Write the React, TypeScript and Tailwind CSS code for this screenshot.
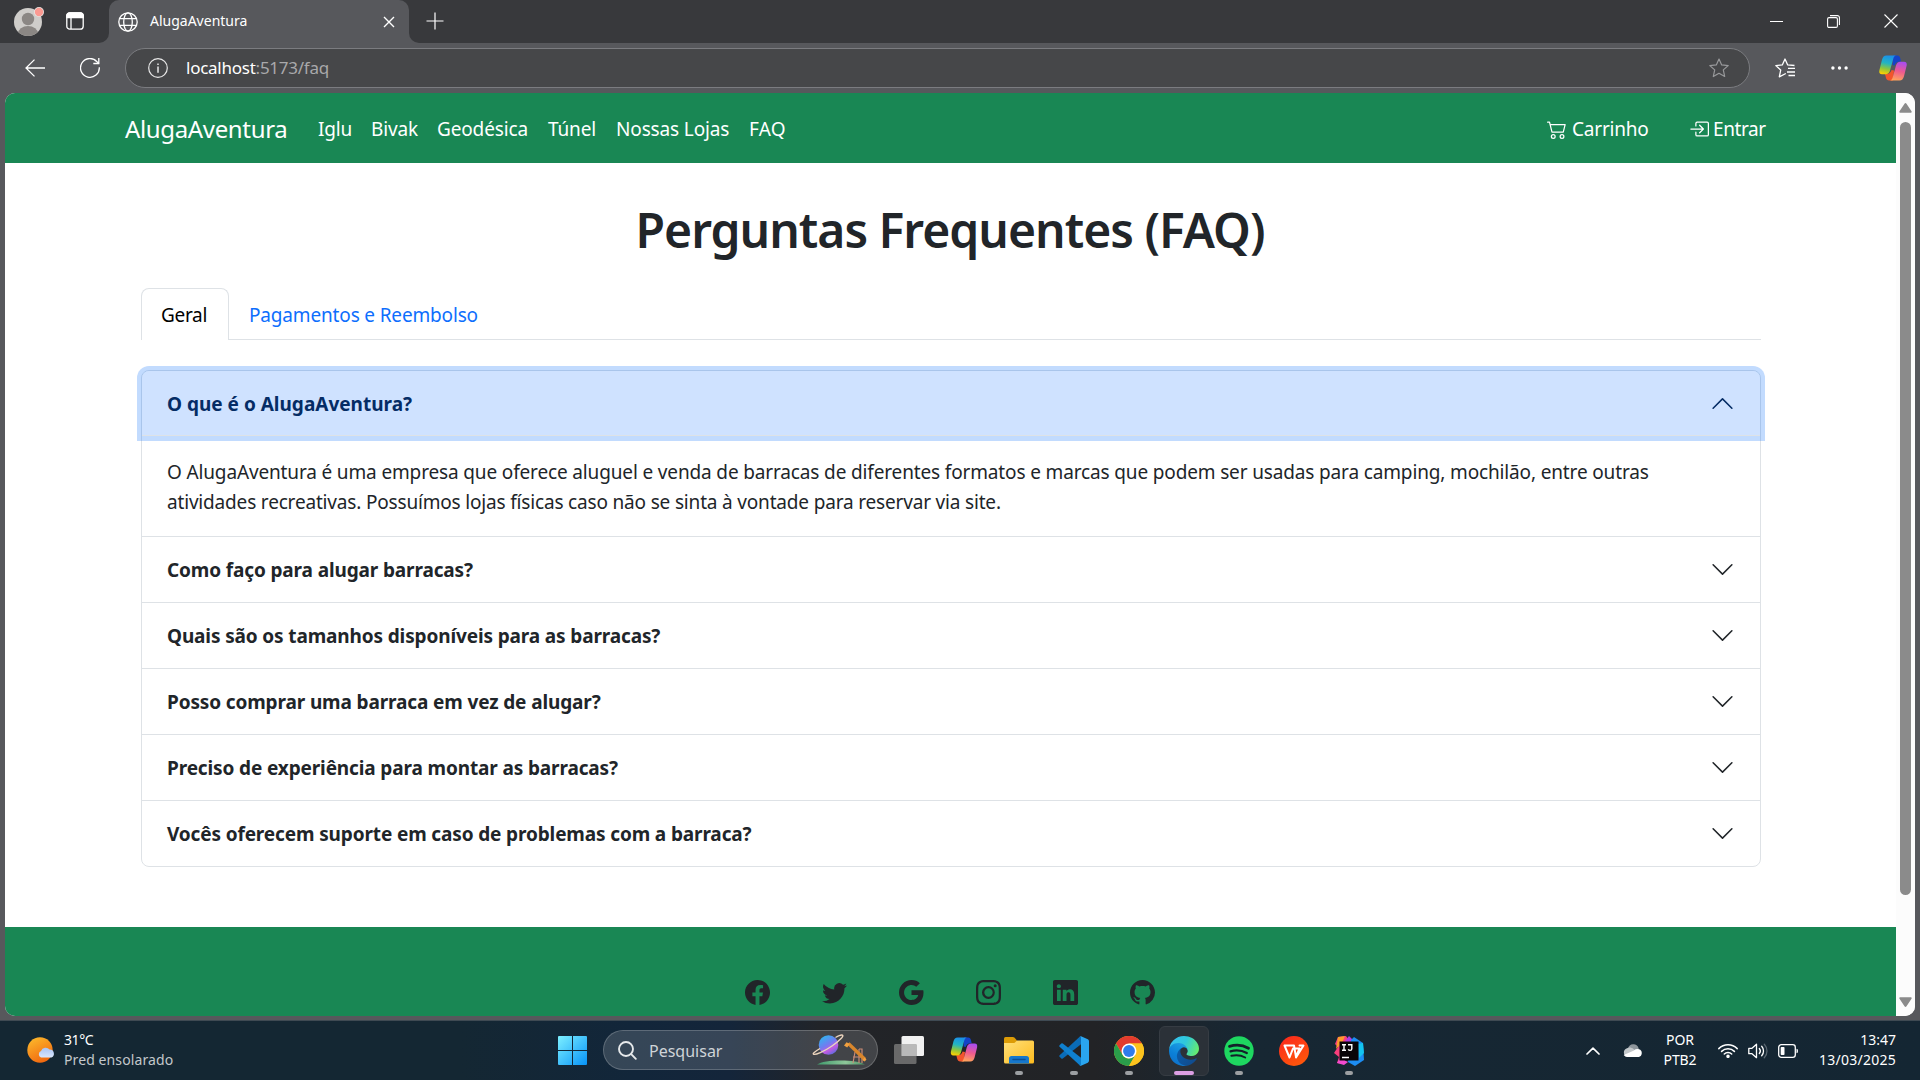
import type { ReactNode } from "react";
import {
  BsBoxArrowInRight,
  BsCart2,
  BsChevronDown,
  BsChevronUp,
  BsFacebook,
  BsGithub,
  BsGoogle,
  BsInstagram,
  BsLinkedin,
  BsTwitter,
} from "react-icons/bs";

function CopilotIcon({ id, className }: { id: string; className: string }) {
  return (
    <svg viewBox="0 0 28 26" className={className}>
      <defs>
        <linearGradient id={id + "a"} x1="0.5" y1="0" x2="0.3" y2="1">
          <stop offset="0" stopColor="#1b8fe8" />
          <stop offset="0.4" stopColor="#22b4c4" />
          <stop offset="0.7" stopColor="#8cc63f" />
          <stop offset="1" stopColor="#ffd000" />
        </linearGradient>
        <linearGradient id={id + "b"} x1="0.6" y1="0" x2="0.4" y2="1">
          <stop offset="0" stopColor="#a94cf0" />
          <stop offset="0.5" stopColor="#ee5a90" />
          <stop offset="1" stopColor="#ffa45c" />
        </linearGradient>
      </defs>
      <path d="M14 0.5 H18.5 C20 0.5 20.8 1.5 21.2 3 L22 6.5 C18 6.5 16.5 8 15.8 10.5 L13.5 10Z" fill="#1443c8" />
      <path d="M14 25.5 H10 C8.3 25.5 7.5 24.5 7 23 L6 19 C10.5 19 11.8 17.5 12.5 15 L15 15.5Z" fill="#f2552c" />
      <path d="M7.5 0.5 H17.5 C15.5 0.5 14.8 2 14.2 4 L11 15.5 C10.2 18 9 19.3 6.5 19.3 H3 C0.6 19.3 -0.1 17.6 0.4 15.2 L3 4.8 C3.8 2 5 0.5 7.5 0.5Z" fill={`url(#${id}a)`} />
      <path d="M20.5 25.5 H10.5 C12.5 25.5 13.2 24 13.8 22 L17 10.5 C17.8 8 19 6.7 21.5 6.7 H25 C27.4 6.7 28.1 8.4 27.6 10.8 L25 21.2 C24.2 24 23 25.5 20.5 25.5Z" fill={`url(#${id}b)`} />
    </svg>
  );
}

function TitleBar() {
  return (
    <div className="flex h-[43px] bg-[#57585c] text-white">
      <div className="flex w-[109px] items-center rounded-br-[10px] bg-[#38393c] pl-[14px]">
        <svg viewBox="0 0 30 30" className="h-[30px] w-[30px] shrink-0">
          <clipPath id="avatar">
            <circle cx="14" cy="15" r="14" />
          </clipPath>
          <circle cx="14" cy="15" r="14" fill="#cfcdca" />
          <g clipPath="url(#avatar)" fill="#8b8784">
            <circle cx="14" cy="12" r="6.2" />
            <ellipse cx="14" cy="26.5" rx="10" ry="7.5" />
          </g>
          <circle cx="25" cy="5" r="5" fill="#e8e4e2" />
          <circle cx="25" cy="5" r="4.2" fill="#fb9a92" />
        </svg>
        <svg viewBox="0 0 18 18" className="mb-px ml-[22px] h-[18px] w-[18px]" fill="none" stroke="#fff" strokeWidth="1.3">
          <rect x="0.8" y="0.8" width="16.4" height="16.4" rx="3" />
          <path d="M0.8 5.5V3.5a2.7 2.7 0 0 1 2.7-2.7h11a2.7 2.7 0 0 1 2.7 2.7v2Z" fill="#fff" />
          <path d="M5 5v12" />
        </svg>
      </div>
      <div className="w-[300px] bg-[#38393c]">
        <div className="flex h-full items-center rounded-t-[10px] bg-[#57585c] pl-[9px] pr-[14px]">
          <svg viewBox="0 0 20 20" className="h-5 w-5" fill="none" stroke="#fff" strokeWidth="1.3">
            <circle cx="10" cy="10" r="9.2" />
            <ellipse cx="10" cy="10" rx="4.3" ry="9.2" />
            <path d="M1.5 6.7h17M1.5 13.3h17" />
          </svg>
          <span className="mb-0.5 ml-3 text-[14px] leading-5">AlugaAventura</span>
          <svg viewBox="0 0 12 12" className="ml-auto h-3 w-3" stroke="#fff" strokeWidth="1.4">
            <path d="M1 1l10 10M11 1L1 11" />
          </svg>
        </div>
      </div>
      <div className="flex flex-1 items-center rounded-bl-[10px] bg-[#38393c] pb-px pl-[17px] pr-[22px]">
        <svg viewBox="0 0 18 18" className="h-[18px] w-[18px]" stroke="#fff" strokeWidth="1.2">
          <path d="M9 0.5v17M0.500 9h17" />
        </svg>
        <div className="ml-auto flex items-center gap-11">
          <svg viewBox="0 0 13 13" className="h-[13px] w-[13px]" stroke="#fff">
            <path d="M0 6.5h13" />
          </svg>
          <svg viewBox="0 0 13 13" className="h-[13px] w-[13px]" fill="none" stroke="#fff" strokeWidth="1.1">
            <rect x="0.6" y="2.6" width="9.8" height="9.8" rx="1.4" />
            <path d="M3 0.6h7.4a2 2 0 0 1 2 2V10" />
          </svg>
          <svg viewBox="0 0 14 14" className="h-[14px] w-[14px]" stroke="#fff" strokeWidth="1.1">
            <path d="M0.500 0.500l13 13M13.500 0.500l-13 13" />
          </svg>
        </div>
      </div>
    </div>
  );
}

function AddressBar() {
  return (
    <div className="flex h-[50px] items-center bg-[#57585c]">
      <svg viewBox="0 0 20 18" className="mb-px ml-[25px] h-[18px] w-5" fill="none" stroke="#fff" strokeWidth="1.3">
        <path d="M20 9H1M9.500 0.600L1 9l8.500 8.400" />
      </svg>
      <svg viewBox="0 0 20 20" className="ml-[35px] h-5 w-5" fill="none" stroke="#fff" strokeWidth="1.3">
        <path d="M19.300 9.200A9.400 9.400 0 1 1 17 3.700L18.800 5.500" />
        <path d="M18.800 0v5.500h-5.500" />
      </svg>
      <div className="ml-[25px] flex h-10 w-[1625px] items-center rounded-full border border-[#7b7c80] bg-[#464749] pl-[22px] pr-[20px]">
        <svg viewBox="0 0 20 20" className="h-5 w-5" fill="none" stroke="#e8e8e8" strokeWidth="1.2">
          <circle cx="10" cy="10" r="9.300" />
          <path d="M10 8.500v6.300M10 5.400v1.500" strokeWidth="1.5" />
        </svg>
        <span className="ml-[18px] text-[17px] leading-6 tracking-[-0.25px] text-white">
          localhost<span className="text-[#a9a9ab]">:5173/faq</span>
        </span>
        <svg viewBox="0 0 20 20" className="ml-auto h-5 w-5" fill="none" stroke="#98999b" strokeWidth="1.2" strokeLinejoin="round">
          <path d="M10 1l2.700 5.900 6.500.7-4.900 4.300 1.400 6.600L10 15.300l-5.700 3.200 1.400-6.600L.8 7.600l6.500-.7z" />
        </svg>
      </div>
      <svg viewBox="0 0 20 20" className="ml-[25px] h-5 w-5" fill="none" stroke="#fff" strokeWidth="1.3" strokeLinejoin="round">
        <path d="M10.800 15.500L4.300 18.800l1.400-6.700L.8 7.600l6.500-.7L10 1l2.700 5.900 6.800.6" />
        <path d="M13 10.300h7M12 14h8M13.500 17.500H20" strokeLinejoin="miter" />
      </svg>
      <svg viewBox="0 0 17 4" className="ml-9 h-1 w-[17px]" fill="#fff">
        <circle cx="1.900" cy="2" r="1.700" />
        <circle cx="8.500" cy="2" r="1.700" />
        <circle cx="15.100" cy="2" r="1.700" />
      </svg>
      <CopilotIcon id="edgeCopilot" className="ml-[31px] h-[26px] w-7" />
    </div>
  );
}

function SiteNav() {
  return (
    <nav className="flex h-[70px] items-center bg-[#198754] pt-0.5 pl-[120px] text-[19px] tracking-[-0.14px] whitespace-nowrap text-white">
      <a className="w-[193px] text-[24px] tracking-[-0.35px]">AlugaAventura</a>
      <a className="w-[53px]">Iglu</a>
      <a className="w-[66px]">Bivak</a>
      <a className="w-[111px]">Geodésica</a>
      <a className="w-[68px]">Túnel</a>
      <a className="w-[133px]">Nossas Lojas</a>
      <a className="tracking-[0.3px]">FAQ</a>
      <div className="ml-auto flex w-[349px] items-center">
        <a className="flex w-[142px] items-center gap-[5px] tracking-[-0.2px]">
          <BsCart2 className="h-5 w-5" />
          Carrinho
        </a>
        <a className="flex items-center gap-1 tracking-[-0.4px]">
          <BsBoxArrowInRight className="h-5 w-5" />
          Entrar
        </a>
      </div>
    </nav>
  );
}

const closedQuestions = [
  "Como faço para alugar barracas?",
  "Quais são os tamanhos disponíveis para as barracas?",
  "Posso comprar uma barraca em vez de alugar?",
  "Preciso de experiência para montar as barracas?",
  "Vocês oferecem suporte em caso de problemas com a barraca?",
];

function Faq() {
  return (
    <main className="h-[764px] pr-[135px] pl-[136px] text-[#212529]">
      <h1 className="pt-[37px] pr-0.5 text-center text-[48px] leading-[60px] font-semibold tracking-[-1px]">
        Perguntas Frequentes (FAQ)
      </h1>
      <div className="mt-7 flex h-[52px] border-b border-[#dee2e6] text-[19px]">
        <button className="-mb-px flex w-[88px] items-center rounded-t-lg border border-b-0 border-[#dee2e6] bg-white pt-0.5 pl-[19px] tracking-[-0.3px] text-black">
          Geral
        </button>
        <button className="flex items-center pt-[3px] pl-5 tracking-[-0.16px] text-[#0d6efd]">Pagamentos e Reembolso</button>
      </div>
      <div className="mt-[30px] rounded-lg border border-[#dee2e6] text-[19px]">
        <div className="relative z-10 flex h-[65px] items-center justify-between rounded-t-[7px] bg-[#cfe2ff] pr-[25px] pl-[25px] font-bold text-[#052c65] shadow-[inset_0_-1px_0_#dee2e6,0_0_0_5px_rgba(13,110,253,0.25)]">
          <span className="pt-0.5">O que é o AlugaAventura?</span>
          <BsChevronUp className="h-[25px] w-[25px]" />
        </div>
        <p className="h-[100px] pt-[21px] pl-[25px] leading-[30px] tracking-[-0.145px] whitespace-nowrap">
          O AlugaAventura é uma empresa que oferece aluguel e venda de barracas de diferentes formatos e marcas que podem
          ser usadas para camping, mochilão, entre outras
          <br />
          <span className="tracking-[-0.175px]">
            atividades recreativas. Possuímos lojas físicas caso não se sinta à vontade para reservar via site.
          </span>
        </p>
        {closedQuestions.map((q) => (
          <div
            key={q}
            className="flex h-[66px] items-center justify-between border-t border-[#dee2e6] pr-[25px] pl-[25px] font-bold tracking-[-0.13px]"
          >
            <span className="pt-0.5">{q}</span>
            <BsChevronDown className="h-[25px] w-[25px]" />
          </div>
        ))}
      </div>
    </main>
  );
}

function SiteFooter() {
  return (
    <footer className="flex h-[89px] justify-center gap-[52px] bg-[#198754] pt-[53px] pr-[2px] text-[25px] text-[#212529]">
      <BsFacebook />
      <BsTwitter />
      <BsGoogle />
      <BsInstagram />
      <BsLinkedin />
      <BsGithub />
    </footer>
  );
}

function Scrollbar() {
  return (
    <div className="flex w-[19px] flex-col items-center bg-[#fcfcfc] pt-[10px] pb-[9px]">
      <svg viewBox="0 0 13 10" className="h-[10px] w-[13px]" fill="#8b8b8b">
        <path d="M5.500.8a1.200 1.200 0 0 1 2 0l5 7.400c.5.800 0 1.600-.9 1.600H1.400C.5 9.800 0 9 .5 8.200Z" />
      </svg>
      <div className="mt-[9px] h-[773px] w-[11px] rounded-full bg-[#8b8b8b]" />
      <svg viewBox="0 0 13 10" className="mt-auto h-[10px] w-[13px] rotate-180" fill="#8b8b8b">
        <path d="M5.500.8a1.200 1.200 0 0 1 2 0l5 7.400c.5.800 0 1.600-.9 1.600H1.400C.5 9.800 0 9 .5 8.200Z" />
      </svg>
    </div>
  );
}

function TaskSlot({ children, state }: { children: ReactNode; state?: "open" | "active" }) {
  return (
    <div className="flex h-[59px] w-[55px] items-center justify-center">
      <div
        className={
          state === "active"
            ? "relative flex h-[50px] w-[50px] items-center justify-center rounded-md border border-[#363c43] bg-[#2b3138]"
            : "relative flex h-[50px] w-[50px] items-center justify-center"
        }
      >
        {children}
        {state === "open" && <span className="absolute bottom-[1px] h-1 w-2 rounded-full bg-[#9c9fa2]" />}
        {state === "active" && <span className="absolute bottom-0 h-1 w-5 rounded-full bg-[#dc9fe3]" />}
      </div>
    </div>
  );
}

function SearchArt() {
  return (
    <svg viewBox="0 0 56 32" className="ml-auto h-8 w-14">
      <defs>
        <linearGradient id="planet" x1="0.2" y1="0" x2="0.8" y2="1">
          <stop offset="0" stopColor="#2bb8ee" />
          <stop offset="0.45" stopColor="#6f7df0" />
          <stop offset="0.7" stopColor="#c05be0" />
          <stop offset="1" stopColor="#4a6fe0" />
        </linearGradient>
        <linearGradient id="grass">
          <stop offset="0" stopColor="#3f9a6c" />
          <stop offset="0.6" stopColor="#8fc79a" />
          <stop offset="1" stopColor="#4b8f62" />
        </linearGradient>
      </defs>
      <path d="M5 30.500C12 25 45 25 53 30.500Z" fill="url(#grass)" />
      <circle cx="16.500" cy="11" r="9.800" fill="url(#planet)" />
      <path d="M8 14.500C3 17.500.5 19.500 1.500 20.200 3 21.400 12 17.500 20 12S32 2 30.500 1.200C29.500.6 26.500 1.800 23.500 3.500" fill="none" stroke="#ecd5be" strokeWidth="1.400" />
      <path d="M43 18l-2 11M47 15v14M47 15h3v14M41 23h9" stroke="#c98b76" strokeWidth="1.200" fill="none" />
      <path d="M35 10.500l2.500-2.200L54 24l-1.800 3.200Z" fill="#d9862c" />
      <path d="M32 11.500l2.600-3.200 3.200 1.600-2.600 3.600ZM50.500 26l2-2.600 2 2-1.800 2.200Z" fill="#f0a040" />
    </svg>
  );
}

function TaskIcons() {
  return (
    <div className="ml-[3px] flex">
      <TaskSlot>
        <svg viewBox="0 0 30 28" className="mb-0.5 h-7 w-[30px]">
          <rect x="7.500" width="22.500" height="20" rx="1.500" fill="#f1f1f1" />
          <rect y="8" width="22.500" height="20" rx="1.500" fill="#767676" fillOpacity="0.85" />
          <path d="M7.500 8h15v12h-15z" fill="#b9b9b9" />
        </svg>
      </TaskSlot>
      <TaskSlot>
        <CopilotIcon id="taskCopilot" className="mb-0.5 h-[25px] w-7" />
      </TaskSlot>
      <TaskSlot state="open">
        <svg viewBox="0 0 30 27" className="h-[27px] w-[30px]">
          <defs>
            <linearGradient id="folder" x1="0" y1="0" x2="1" y2="1">
              <stop offset="0" stopColor="#ffe07a" />
              <stop offset="1" stopColor="#fdbb1e" />
            </linearGradient>
          </defs>
          <path d="M0 1.500Q0 0 1.500 0h7.300q1 0 1.800.8L13 3.500V9H0z" fill="#dd9c06" />
          <path d="M0 6h9.500q.8 0 1.500-.6L13 3.500h15.500Q30 3.500 30 5v20q0 1.500-1.500 1.500h-27Q0 26.500 0 25z" fill="url(#folder)" />
          <path d="M5 26.500v-5q0-2.500 2.500-2.500h15q2.500 0 2.500 2.500v5z" fill="#1677cc" />
          <path d="M9 22.500h12" stroke="#0b4f96" strokeWidth="1.500" strokeLinecap="round" />
        </svg>
      </TaskSlot>
      <TaskSlot state="open">
        <svg viewBox="0 0 30 30" className="h-[30px] w-[30px]">
          <path d="M22 8.300L3.800 22.400q-.8.600-1.500 0L.6 20.800q-.8-.8 0-1.600L20.700.8 22 .3z" fill="#0a6cb8" />
          <path d="M22 21.700L3.800 7.600q-.8-.6-1.500 0L.6 9.200q-.8.800 0 1.600l20.100 18.400 1.300.5z" fill="#0f80cf" />
          <path d="M22 .2l6.800 3.100Q30 4 30 5.200v19.600q0 1.200-1.200 1.900L22 29.800q-1 .3-1.800-.6 1.800 1 1.800-1V1.800q0-2-1.800-1Q21-.1 22 .2z" fill="#2aa5ef" />
        </svg>
      </TaskSlot>
      <TaskSlot state="open">
        <svg viewBox="0 0 48 48" className="h-[30px] w-[30px]">
          <circle cx="24" cy="24" r="24" fill="#fcc31e" />
          <path d="M24 12H44.800A24 24 0 0 0 3.200 12L13.600 30Z" fill="#e33b2e" />
          <path d="M34.400 30L24 48A24 24 0 0 1 3.200 12L13.600 30A12 12 0 0 0 24 36Z" fill="#2a9d4a" />
          <path d="M24 12H44.800A24 24 0 0 1 24 48L34.400 30A12 12 0 0 0 34.400 18Z" fill="#fcc31e" />
          <circle cx="24" cy="24" r="12" fill="#fff" />
          <circle cx="24" cy="24" r="9.500" fill="#2f7cec" />
        </svg>
      </TaskSlot>
      <TaskSlot state="active">
        <svg viewBox="0 0 256 256" className="h-[30px] w-[30px]">
          <defs>
            <linearGradient id="edgeDark" x1="0.2" y1="0.3" x2="1" y2="0.8">
              <stop offset="0" stopColor="#0c59a4" />
              <stop offset="1" stopColor="#114a8b" />
            </linearGradient>
            <linearGradient id="edgeBlue" x1="0.6" y1="0.1" x2="0.2" y2="1">
              <stop offset="0" stopColor="#1b9de2" />
              <stop offset="0.5" stopColor="#0b80d8" />
              <stop offset="1" stopColor="#0f6fc8" />
            </linearGradient>
            <linearGradient id="edgeGreen" x1="0" y1="0.3" x2="1" y2="0.6">
              <stop offset="0" stopColor="#35c1f1" />
              <stop offset="0.5" stopColor="#2fc8dc" />
              <stop offset="1" stopColor="#66eb6e" />
            </linearGradient>
          </defs>
          <path fill="url(#edgeDark)" d="M231 190.500c-3.400 1.800-6.900 3.400-10.500 4.700a101.900 101.900 0 0 1-35.900 6.500c-47.300 0-88.500-32.500-88.500-74.300a31.500 31.500 0 0 1 16.400-27.300c-42.800 1.800-53.800 46.400-53.800 72.500 0 73.900 68.100 81.400 82.800 81.400 7.900 0 19.800-2.300 27-4.600l1.300-.4a128.300 128.300 0 0 0 66.600-52.800 4 4 0 0 0-5.400-5.700z" />
          <path fill="url(#edgeBlue)" d="M105.700 241.400a79.200 79.200 0 0 1-22.700-21.300 80.700 80.700 0 0 1 29.500-120c3.200-1.500 8.500-4.100 15.600-4a32.400 32.400 0 0 1 25.700 13 31.900 31.900 0 0 1 6.300 18.700c0-.2 24.500-79.600-80-79.600-43.900 0-80 41.700-80 78.200a130.200 130.200 0 0 0 12.100 56 128 128 0 0 0 156.400 67 75.500 75.500 0 0 1-62.800-8z" />
          <path fill="url(#edgeGreen)" d="M152.300 148.900c-.9 1-3.400 2.500-3.400 5.600 0 2.600 1.700 5.200 4.800 7.300 14.300 10 41.400 8.600 41.500 8.600a59.600 59.600 0 0 0 30.300-8.300 61.400 61.400 0 0 0 30.400-52.900c.3-22.400-8-37.300-11.300-43.900C223.500 23.900 177.700 0 128 0A128 128 0 0 0 0 126.200c.5-36.500 36.800-66 80-66 3.500 0 23.500.3 42 10a72.600 72.600 0 0 1 30.900 29.300c6.100 10.600 7.200 24.100 7.200 29.500s-2.700 13.300-7.800 19.900z" />
        </svg>
      </TaskSlot>
      <TaskSlot state="open">
        <svg viewBox="0 0 30 30" className="h-[30px] w-[30px]" fill="none" stroke="#14202a" strokeLinecap="round">
          <circle cx="15" cy="15" r="14.700" fill="#1ed760" stroke="none" />
          <path d="M5.500 10.300C11.500 8.500 19 9 24.500 12.200" strokeWidth="2.800" />
          <path d="M6.500 15.300C12 13.800 18 14.400 22.800 17" strokeWidth="2.300" />
          <path d="M7.300 19.800C12 18.700 17 19.100 21.200 21.500" strokeWidth="1.900" />
        </svg>
      </TaskSlot>
      <TaskSlot>
        <svg viewBox="0 0 30 30" className="h-[30px] w-[30px]">
          <defs>
            <linearGradient id="wps" x1="0.2" y1="0" x2="0.8" y2="1">
              <stop offset="0" stopColor="#fb2a1c" />
              <stop offset="1" stopColor="#ff5a0a" />
            </linearGradient>
          </defs>
          <circle cx="15" cy="15" r="15" fill="url(#wps)" />
          <path d="M5.500 9.500h9.500l2 11.500 3.500-8.500h-4.500M5.500 9.500L10.500 21.500 14 12.500M17 21.500l7.500-12h-4" fill="none" stroke="#fff" strokeWidth="2" strokeLinejoin="round" strokeLinecap="round" />
        </svg>
      </TaskSlot>
      <TaskSlot state="open">
        <svg viewBox="0 0 30 30" className="h-[30px] w-[30px]">
          <path d="M4 1l8-1 4 6-6 22-7-1 2-6-5-4 4-6-3-3z" fill="#fa3f7c" />
          <path d="M4 1l7-1-3 7-6 6z" fill="#fd9a2c" />
          <path d="M11 5l4-5 4 4-3 5z" fill="#b43be0" />
          <path d="M17 4l3-3 9 6 1 17-9 6-7-4z" fill="#1c8df2" />
          <path d="M24 8l5-1 1 10-5 5z" fill="#13c4f0" />
          <path d="M3 27l3-5 8 4-4 3z" fill="#f34bd0" />
          <path d="M5.500 5.500h19v19h-19z" fill="#0a0508" />
          <g stroke="#fff" strokeWidth="1.400" fill="none">
            <path d="M8 8.700h4M10 8.700v5.600M8 14.300h4M14 8.700h3.800v4q0 1.700-1.700 1.700-1.300 0-1.900-1M8 21.500h7" />
          </g>
        </svg>
      </TaskSlot>
    </div>
  );
}

function Tray() {
  return (
    <div className="ml-auto flex items-center pr-6 text-[14px] leading-5 text-white">
      <svg viewBox="0 0 14 8" className="h-2 w-[14px]" fill="none" stroke="#fff" strokeWidth="1.700" strokeLinecap="round" strokeLinejoin="round">
        <path d="M1 7l6-5.800L13 7" />
      </svg>
      <svg viewBox="0 0 20 13" className="ml-[23px] h-[13px] w-5">
        <path d="M5 4.500A5.500 5.500 0 0 1 15.500 4l1 3H5z" fill="#8f969c" />
        <path d="M4.500 13A4.500 4.500 0 0 1 4 4.300C6 3 8.500 3.300 10.500 5l6 4-4 4z" fill="#c3c7ca" />
        <path d="M4.500 13q-2.500 0-3.800-2L11 6.500Q13 4.500 16 5.300a4 4 0 0 1-.3 7.700z" fill="#fff" />
      </svg>
      <div className="mb-px ml-5 w-[34px] text-center">
        <div>POR</div>
        <div className="tracking-[-0.1px]">PTB2</div>
      </div>
      <svg viewBox="0 0 20 15" className="ml-[21px] h-[15px] w-5" fill="none" stroke="#fff" strokeWidth="1.500" strokeLinecap="round">
        <path d="M.8 5.600a13 13 0 0 1 18.400 0M3.600 8.400a9 9 0 0 1 12.800 0M6.300 11a5.200 5.200 0 0 1 7.400 0" />
        <circle cx="10" cy="13.300" r="1" fill="#fff" />
      </svg>
      <svg viewBox="0 0 20 16" className="ml-[10px] h-4 w-5" fill="none" stroke="#fff" strokeWidth="1.300" strokeLinecap="round" strokeLinejoin="round">
        <path d="M.8 5.300h3.200L8.500 1.300v13.400L4 10.700H.8z" />
        <path d="M11.300 5.500a3.800 3.800 0 0 1 0 5M13.700 3.300a7 7 0 0 1 0 9.400" />
        <path d="M16.300 1.200a10 10 0 0 1 0 13.600" stroke="#58656f" />
      </svg>
      <svg viewBox="0 0 20 14" className="ml-[10px] h-[14px] w-5" fill="none" stroke="#fff" strokeWidth="1.300">
        <rect x=".7" y=".7" width="16.600" height="12.600" rx="2.600" />
        <rect x="2.700" y="3" width="3.800" height="8" rx=".8" fill="#fff" stroke="none" />
        <path d="M18.500 4.800q1.500 0 1.500 2.200t-1.500 2.200z" fill="#fff" stroke="none" />
      </svg>
      <div className="mb-0.5 ml-[21px] w-[77px] text-right whitespace-nowrap">
        <div>13:47</div>
        <div className="tracking-[0.25px]">13/03/2025</div>
      </div>
    </div>
  );
}

function Taskbar() {
  return (
    <div className="flex h-[60px] items-center border-t border-[#3f4a53] bg-[linear-gradient(90deg,#142733_0%,#142733_24%,#12263a_33%,#14253a_38%,#222428_43%,#222326_57%,#172733_65%,#142633_100%)]">
      <div className="flex w-[558px] items-center pl-[27px] text-[14px] leading-5 text-white">
        <svg viewBox="0 0 28 26" className="mb-0.5 h-[26px] w-7">
          <defs>
            <linearGradient id="sun" x1="0.2" y1="0" x2="0.7" y2="1">
              <stop offset="0" stopColor="#fcb82b" />
              <stop offset="1" stopColor="#f0640e" />
            </linearGradient>
            <linearGradient id="cloud" x1="0" y1="0" x2="0" y2="1">
              <stop offset="0" stopColor="#a9c4f5" />
              <stop offset="1" stopColor="#d9e6fb" />
            </linearGradient>
          </defs>
          <circle cx="13" cy="13" r="12.700" fill="url(#sun)" />
          <path d="M14 20.500a3.500 3.500 0 0 1 0-6.500 5 5 0 0 1 8.600-1.500A4.200 4.200 0 0 1 24.500 20.500z" fill="url(#cloud)" />
        </svg>
        <div className="mb-0.5 ml-[9px] whitespace-nowrap">
          <div className="tracking-[-0.4px]">31°C</div>
          <div className="tracking-[0.1px] text-[#c3c8cb]">Pred ensolarado</div>
        </div>
      </div>
      <svg viewBox="0 0 29 29" className="h-[29px] w-[29px]">
        <defs>
          <linearGradient id="win" gradientUnits="userSpaceOnUse" x1="0" y1="0" x2="29" y2="29">
            <stop offset="0" stopColor="#7df0ff" />
            <stop offset="1" stopColor="#0793f8" />
          </linearGradient>
        </defs>
        <path d="M0 1q0-1 1-1h13v14H0zM15 0h13q1 0 1 1v13H15zM0 15h14v14H1q-1 0-1-1zM15 15h14v13q0 1-1 1H15z" fill="url(#win)" />
      </svg>
      <div className="mb-px ml-4 flex h-10 w-[275px] items-center rounded-full border border-white/20 bg-white/15 pr-[9px] pl-[14px]">
        <svg viewBox="0 0 19 19" className="h-[19px] w-[19px]" fill="none" stroke="#e6e9eb" strokeWidth="1.900" strokeLinecap="round">
          <circle cx="8" cy="8" r="7" />
          <path d="M13.200 13.200l4.600 4.600" />
        </svg>
        <span className="ml-[12px] pt-px text-[16px] leading-5 text-[#cfd4d8]">Pesquisar</span>
        <SearchArt />
      </div>
      <TaskIcons />
      <Tray />
    </div>
  );
}

export default function App() {
  return (
    <div className="flex h-[1080px] w-[1920px] flex-col overflow-hidden bg-[#57585c] font-['Noto_Sans',sans-serif]">
      <TitleBar />
      <AddressBar />
      <div className="mr-[5px] mb-1 ml-[5px] flex h-[923px] overflow-hidden rounded-[10px] bg-white">
        <div className="w-[1891px]">
          <SiteNav />
          <Faq />
          <SiteFooter />
        </div>
        <Scrollbar />
      </div>
      <Taskbar />
    </div>
  );
}
